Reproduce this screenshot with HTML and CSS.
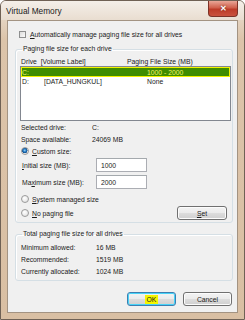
FILE: index.html
```html
<!DOCTYPE html>
<html lang="en">
<head>
    <meta charset="UTF-8">
    <meta name="viewport" content="width=device-width, initial-scale=1.0">
    <title>Virtual Memory</title>
    <link rel="stylesheet" href="styles.css">
</head>
<body>

<div class="window">
    <div class="titlebar">
        <span class="title">Virtual Memory</span>
        <span class="close-btn">&#x2715;</span>
    </div>

    <div class="client">
        <div class="check-row">
            <span class="checkbox"></span>
            <span><u>A</u>utomatically manage paging file size for all drives</span>
        </div>

        <fieldset class="group group-drives">
            <legend>Paging file size for each drive</legend>
            <div class="list-head">
                <span class="col-drive">Drive&nbsp; [Volume Label]</span>
                <span class="col-size">Paging File Size (MB)</span>
            </div>
            <div class="listbox">
                <div class="list-row selected">
                    <span class="col-letter">C:</span>
                    <span class="col-label"></span>
                    <span class="col-value">1000 - 2000</span>
                </div>
                <div class="list-row">
                    <span class="col-letter">D:</span>
                    <span class="col-label">[DATA_HUNGKUL]</span>
                    <span class="col-value">None</span>
                </div>
            </div>

            <div class="info-row">
                <span class="info-label">Selected drive:</span>
                <span>C:</span>
            </div>
            <div class="info-row">
                <span class="info-label">Space available:</span>
                <span>24069 MB</span>
            </div>

            <div class="radio-row">
                <span class="radio checked"></span>
                <span><u>C</u>ustom size:</span>
            </div>
            <div class="field-row first">
                <label class="field-label" for="initial"><u>I</u>nitial size (MB):</label>
                <input class="field-input" id="initial" type="text" value="1000">
            </div>
            <div class="field-row">
                <label class="field-label" for="maximum">Ma<u>x</u>imum size (MB):</label>
                <input class="field-input" id="maximum" type="text" value="2000">
            </div>
            <div class="radio-row system">
                <span class="radio"></span>
                <span><u>S</u>ystem managed size</span>
            </div>
            <div class="radio-row last">
                <span class="radio"></span>
                <span><u>N</u>o paging file</span>
                <button class="btn btn-set"><u>S</u>et</button>
            </div>
        </fieldset>

        <fieldset class="group group-total">
            <legend>Total paging file size for all drives</legend>
            <div class="total-row">
                <span class="total-label">Minimum allowed:</span>
                <span>16 MB</span>
            </div>
            <div class="total-row">
                <span class="total-label">Recommended:</span>
                <span>1519 MB</span>
            </div>
            <div class="total-row">
                <span class="total-label">Currently allocated:</span>
                <span>1024 MB</span>
            </div>
        </fieldset>

        <div class="button-row">
            <button class="btn btn-default"><span class="hl">OK</span></button>
            <button class="btn">Cancel</button>
        </div>
    </div>
</div>

</body>
</html>
```

FILE: styles.css
```css
* {
    box-sizing: border-box;
}
body {
    margin: 0;
    font-family: "Liberation Sans", Arial, sans-serif;
    font-size: 6.8px;
    color: #1b1b1b;
}
u {
    text-decoration-thickness: 1px;
    text-underline-offset: 1px;
}
.window {
    width: 245px;
    height: 320px;
    background: linear-gradient(#ece2d6, #dcc4aa 12%, #d9bfa3);
    border: 1px solid #6f6155;
    border-radius: 6px 6px 0 0;
    display: flex;
    flex-direction: column;
}
.titlebar {
    height: 19px;
    display: flex;
    justify-content: space-between;
    align-items: flex-start;
    padding-left: 5px;
    background: linear-gradient(#f4efe9, #e9ddd0);
    border-radius: 5px 5px 0 0;
}
.title {
    font-size: 8.3px;
    margin-top: 5px;
    color: #1a1a1a;
}
.close-btn {
    width: 30px;
    height: 16px;
    margin-right: 6px;
    background: linear-gradient(#e9a697, #d0604c 45%, #bd3b28 55%, #c9523d);
    border: 1px solid #7d3327;
    border-top: none;
    border-radius: 0 0 4px 4px;
    color: #fff;
    font-weight: bold;
    font-size: 8px;
    display: flex;
    align-items: center;
    justify-content: center;
    text-shadow: 0 0 2px #6a1d12;
}
.client {
    margin: 0 6px 6px 6px;
    flex: 1;
    background: #f0f0f0;
    border: 1px solid #a39382;
    padding: 0 4px 0 7px;
}
.check-row {
    display: flex;
    align-items: center;
    gap: 4px;
    height: 10px;
    margin-top: 8px;
    padding-left: 4px;
}
.checkbox {
    width: 7px;
    height: 7px;
    border: 1px solid #8e8f8f;
    background: linear-gradient(135deg, #dcdcdc, #fbfbfb);
}
.group {
    margin: 0;
    padding: 0 1px 2px 4px;
    border: 1px solid #d5dfe5;
    border-radius: 3px;
    min-width: 0;
    box-shadow: inset 1px 1px 0 #ffffff;
}
.group legend {
    padding: 0 1px;
    margin-left: 2px;
    line-height: 10px;
}
.group-drives {
    margin-top: 5px;
}
.list-head {
    display: flex;
    height: 9px;
    align-items: center;
    margin-top: 3px;
    padding-left: 1px;
}
.col-drive {
    width: 106px;
}
.listbox {
    height: 55px;
    background: #fff;
    border: 1px solid #828790;
    padding-top: 0;
}
.list-row {
    display: flex;
    align-items: center;
    height: 9px;
    padding-left: 1px;
}
.list-row.selected {
    height: 10px;
    background: #3f8d00;
    border: 1px solid #f2f200;
    color: #f4f56a;
    padding-left: 0;
}
.col-letter {
    width: 22px;
}
.col-label {
    width: 103px;
}
.info-row,
.total-row {
    display: flex;
    align-items: center;
    height: 12px;
    padding-left: 1px;
}
.info-label {
    width: 71px;
}
.radio-row {
    display: flex;
    align-items: center;
    gap: 3px;
    height: 12px;
    padding-left: 1px;
}
.radio-row.system {
    margin-top: 4px;
}
.radio-row.last {
    height: 14px;
    margin-top: 1px;
}
.radio {
    width: 8px;
    height: 8px;
    border-radius: 50%;
    border: 1px solid #9a9a9a;
    background: radial-gradient(circle at 40% 35%, #ffffff, #dcdcdc);
}
.radio.checked {
    background: radial-gradient(circle at 45% 40%, #8fd6ff 0, #1f6fb8 35%, #0d4a86 55%, #e8e8e8 60%);
}
.field-row {
    display: flex;
    align-items: center;
    height: 14px;
    margin-top: 3px;
    padding-left: 2px;
}
.field-row.first {
    margin-top: 1px;
}
.field-label {
    width: 74px;
}
.field-input {
    width: 51px;
    height: 14px;
    border: 1px solid #abadb3;
    border-top-color: #a4a9ad;
    background: #fff;
    font: inherit;
    color: inherit;
    padding: 0 0 0 4px;
}
.btn {
    width: 49px;
    height: 14px;
    font: inherit;
    color: inherit;
    padding: 0;
    border: 1px solid #707070;
    border-radius: 3px;
    background: linear-gradient(#f3f3f3, #ebebeb 50%, #dddddd 50%, #cfcfcf);
    box-shadow: inset 0 0 0 1px #fcfcfc;
}
.btn-set {
    margin-left: auto;
    margin-right: 4px;
    width: 50px;
}
.group-total {
    margin-top: 6px;
    padding-top: 2px;
    padding-bottom: 3px;
}
.total-label {
    width: 75px;
}
.button-row {
    display: flex;
    justify-content: flex-end;
    gap: 7px;
    margin-top: 11px;
    padding-right: 1px;
}
.btn-default {
    border-color: #3c7fb1;
    box-shadow: inset 0 0 0 1px #48d3f8;
}
.hl {
    background: #f5f500;
    padding: 1px 2px;
}
```
